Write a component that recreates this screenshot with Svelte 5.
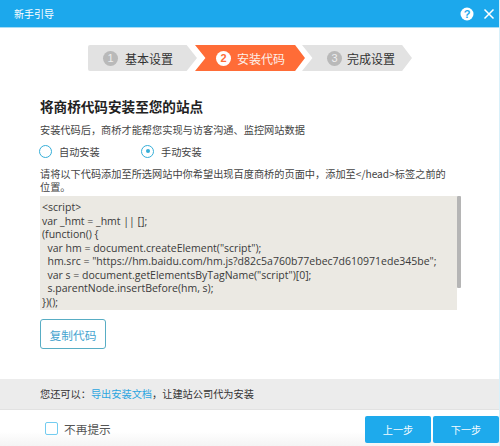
<script>
  const steps = [
    { n: '1', label: '基本设置', cls: 'first' },
    { n: '2', label: '安装代码', cls: 'active' },
    { n: '3', label: '完成设置', cls: 'last' }
  ];
  const code = `<script>
var _hmt = _hmt || [];
(function() {
  var hm = document.createElement("script");
  hm.src = "https://hm.baidu.com/hm.js?d82c5a760b77ebec7d610971ede345be";
  var s = document.getElementsByTagName("script")[0];
  s.parentNode.insertBefore(hm, s);
})();
<\/script>`;
</script>

<div class="win">
  <header class="head">
    <span class="title">新手引导</span>
    <span class="tools">
      <svg width="14" height="14" viewBox="0 0 14 14"><circle cx="7" cy="7" r="6.5" fill="#fff"/><text x="7" y="11" text-anchor="middle" class="q">?</text></svg>
      <svg width="12" height="12" viewBox="0 0 12 12"><path d="M1.5 1.5l9 9M10.5 1.5l-9 9" stroke="#fff" stroke-width="1.5" fill="none"/></svg>
    </span>
  </header>

  <nav class="steps">
    {#each steps as s}
      <div class="step {s.cls}"><span class="num">{s.n}</span><span>{s.label}</span></div>
    {/each}
  </nav>

  <main class="body">
    <h1>将商桥代码安装至您的站点</h1>
    <p class="intro">安装代码后，商桥才能帮您实现与访客沟通、监控网站数据</p>
    <div class="radios">
      <label class="radio"><span class="dot"></span>自动安装</label>
      <label class="radio on"><span class="dot"></span>手动安装</label>
    </div>
    <p class="desc">请将以下代码添加至所选网站中你希望出现百度商桥的页面中，添加至&lt;/head&gt;标签之前的位置。</p>
    <div class="codewrap">
      <pre class="code">{code}</pre>
      <div class="track"><div class="thumb"></div></div>
    </div>
    <button class="copy">复制代码</button>
  </main>

  <div class="note">您还可以：<span class="link">导出安装文档</span>，让建站公司代为安装</div>

  <footer class="foot">
    <label class="check"><span class="box"></span>不再提示</label>
    <div class="btns"><button class="pri">上一步</button><button class="pri">下一步</button></div>
  </footer>
</div>

<style>
  :global(body) { margin: 0; background: #fff; }
  .win {
    width: 500px; height: 446px; display: flex; flex-direction: column; overflow: hidden;
    font-family: "Noto Sans CJK SC", "Liberation Sans", sans-serif; color: #444; font-size: 10.2px;
    background: #fff; box-sizing: border-box; border-right: 1px solid #d8f0fa;
  }
  .head {
    height: 27px; flex: none; background: #1ca8ec; color: #fff; display: flex; align-items: center;
    justify-content: space-between; padding: 0 4px 0 14px; border-bottom: 1px solid #a8dcf4; box-sizing: content-box;
  }
  .title { font-size: 10px; }
  .tools { display: flex; align-items: center; gap: 9px; }
  .q { font: bold 11px "Liberation Sans", sans-serif; fill: #1ca8ec; }
  .steps { display: flex; padding: 17px 0 0 88px; height: 26px; flex: none; }
  .step {
    height: 26px; width: 110px; margin-right: -3px; background: #e2e2e2; color: #333; font-size: 12px;
    display: flex; align-items: center; gap: 6px; box-sizing: border-box; padding-left: 27px; flex: none;
    clip-path: polygon(0 0, 91% 0, 100% 50%, 91% 100%, 0 100%, 9.5% 50%);
  }
  .step.first { clip-path: polygon(0 0, 90.5% 0, 100% 50%, 90.5% 100%, 0 100%); border-radius: 2px 0 0 2px; padding-left: 15px; width: 109px; margin-right: -2px; gap: 7px; }
  .step.active { background: #ff6c37; color: #fdf0ea; padding-left: 21px; }
  .step.last { padding-left: 25px; gap: 5px; }
  .num {
    width: 15px; height: 15px; border-radius: 50%; background: #b9b9b9; color: #eee; font: 11px/15px "Liberation Sans", sans-serif;
    text-align: center; flex: none;
  }
  .active .num { background: #fff; color: #ff6c37; font-weight: bold; }
  .body { flex: 1; padding: 25px 0 0 40px; display: flex; flex-direction: column; align-items: flex-start; min-height: 0; }
  h1 { margin: 0; font-size: 13.6px; line-height: 20px; color: #222; font-weight: 700; }
  .intro { margin: 6px 0 0; line-height: 16px; }
  .radios { display: flex; margin-top: 2px; height: 22px; align-items: center; margin-left: -1px; }
  .radio { display: flex; align-items: center; width: 102px; gap: 7px; }
  .dot { width: 11px; height: 11px; border: 1px solid #35aed8; border-radius: 50%; flex: none; position: relative; box-sizing: content-box; }
  .on .dot::after { content: ""; position: absolute; left: 3.5px; top: 3.5px; width: 4px; height: 4px; border-radius: 50%; background: #35aed8; }
  .desc { margin: 5px 0 0; width: 413px; line-height: 13px; }
  .codewrap { display: flex; margin-top: 3px; }
  .code {
    margin: 0; width: 417px; height: 114px; overflow: hidden; background: #ebe9e3; box-sizing: border-box; padding: 5px 0 0 2px;
    font: 10.5px/13.5px "Open Sans", sans-serif; color: #3a3a3a; white-space: pre;
  }
  .track { width: 4px; height: 114px; }
  .thumb { height: 92px; background: #b5b5b5; border-radius: 1px; }
  .copy {
    margin-top: 9px; width: 66px; height: 30px; border: 1px solid #58adc4; border-radius: 3px; background: #fff;
    color: #46a4cf; font: 11.7px "Noto Sans CJK SC", sans-serif; padding: 0;
  }
  .note { height: 31px; flex: none; background: #ececec; border-bottom: 1px solid #e2e2e2; box-sizing: border-box; padding-left: 40px; line-height: 30px; color: #333; }
  .link { color: #2ba5e0; }
  .foot { height: 36px; flex: none; display: flex; justify-content: space-between; align-items: center; padding-left: 45px; background: linear-gradient(#fff 60%, #f4f4f4); }
  .check { display: flex; align-items: center; gap: 6px; color: #555; font-size: 11.7px; }
  .box { width: 11px; height: 11px; border: 1.5px solid #73ccf0; border-radius: 2px; box-sizing: content-box; }
  .btns { display: flex; gap: 2px; margin-top: 2px; }
  .pri { width: 66px; height: 27px; border: 0; border-radius: 2px; background: #1eaaec; color: #f4fbff; font: 10.2px "Noto Sans CJK SC", sans-serif; padding: 0; }
</style>
